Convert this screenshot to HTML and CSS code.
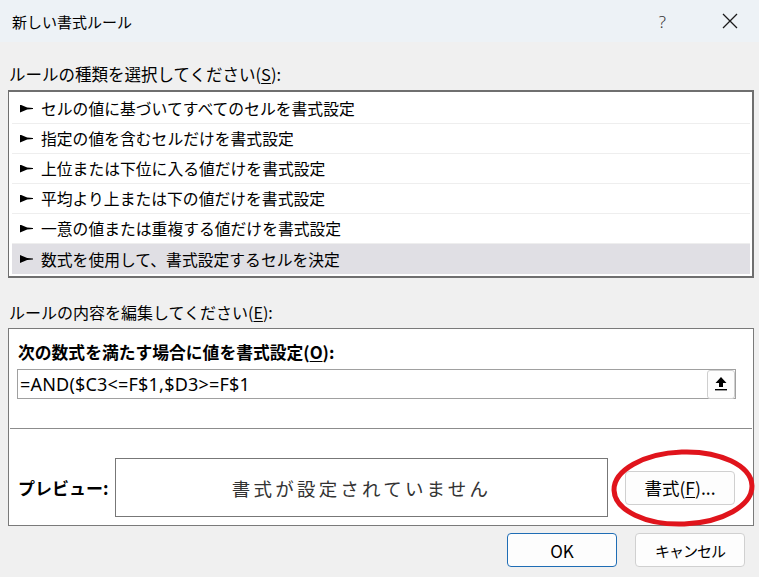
FILE: index.html
```html
<!DOCTYPE html>
<html lang="ja">
<head>
  <meta charset="UTF-8">
  <title>新しい書式ルール</title>
  <link rel="stylesheet" href="styles.css">
</head>
<body>
  <div class="dialog">
    <div class="titlebar">
      <span class="title">新しい書式ルール</span>
      <span class="help">?</span>
      <span class="close">
        <svg width="16" height="16" viewBox="0 0 16 16"><path d="M1 1L15 15M15 1L1 15" stroke="#1a1a1a" stroke-width="1.3" fill="none"/></svg>
      </span>
    </div>

    <div class="content">
      <div class="label">ルールの種類を選択してください(<u>S</u>):</div>
      <div class="listbox">
        <div class="item"><span class="arrow"></span>セルの値に基づいてすべてのセルを書式設定</div>
        <div class="item"><span class="arrow"></span>指定の値を含むセルだけを書式設定</div>
        <div class="item"><span class="arrow"></span>上位または下位に入る値だけを書式設定</div>
        <div class="item"><span class="arrow"></span>平均より上または下の値だけを書式設定</div>
        <div class="item"><span class="arrow"></span>一意の値または重複する値だけを書式設定</div>
        <div class="item selected"><span class="arrow"></span>数式を使用して、書式設定するセルを決定</div>
      </div>

      <div class="label label2">ルールの内容を編集してください(<u>E</u>):</div>
      <div class="panel">
        <div class="bold-label">次の数式を満たす場合に値を書式設定(<u>O</u>):</div>
        <div class="formula">
          <span class="formula-text">=AND($C3&lt;=F$1,$D3&gt;=F$1</span>
          <span class="pick">
            <svg width="14" height="16" viewBox="0 0 14 16"><path d="M7 1L12.5 7H9V11H5V7H1.5Z" fill="#000"/><rect x="1" y="13" width="12" height="1.4" fill="#000"/></svg>
          </span>
        </div>
        <div class="sep"></div>
        <div class="preview-row">
          <span class="bold-label">プレビュー:</span>
          <div class="preview">書式が設定されていません</div>
          <div class="format-wrap">
            <button class="btn format-btn">書式(<u>F</u>)...</button>
            <svg class="circle" width="150" height="84" viewBox="0 0 150 84"><ellipse cx="75" cy="42" rx="69" ry="36" fill="none" stroke="#e0141c" stroke-width="5" transform="rotate(-2 75 42)"/></svg>
          </div>
        </div>
      </div>

      <div class="buttons">
        <button class="btn ok">OK</button>
        <button class="btn cancel">キャンセル</button>
      </div>
    </div>
  </div>
</body>
</html>
```

FILE: styles.css
```css
body {
  margin: 0;
  background-color: #f0f0f0;
  font-family: "Noto Sans", "Noto Sans CJK JP", sans-serif;
  color: #000;
}
u {
  text-decoration-thickness: 1px;
  text-underline-offset: 2px;
}
.dialog {
  width: 759px;
  height: 577px;
  overflow: hidden;
}
.titlebar {
  height: 42px;
  background-color: #edf2f6;
  display: flex;
  align-items: center;
  padding-left: 12px;
}
.title {
  font-family: "Noto Sans CJK JP", sans-serif;
  font-size: 15px;
  flex: 1;
}
.help {
  font-size: 17px;
  color: #333;
  margin-right: 56px;
  font-weight: 300;
}
.close {
  display: flex;
  margin-right: 21px;
}
.content {
  padding: 0 5px 0 8px;
}
.label {
  font-family: "Noto Sans CJK JP", sans-serif;
  font-size: 16.5px;
  line-height: 22px;
  margin-top: 21px;
  margin-bottom: 5px;
  padding-left: 1px;
}
.label2 {
  margin-top: 23px;
  font-size: 16px;
}
.listbox {
  background: #fff;
  border: 2px solid #6f6f6f;
  border-left-width: 1px;
  padding: 2px 2px 2px 3px;
}
.item {
  height: 30px;
  box-sizing: border-box;
  border-bottom: 1px solid #eeeeee;
  display: flex;
  align-items: center;
  padding-left: 8px;
  font-family: "Noto Sans CJK JP", sans-serif;
  font-size: 15.8px;
}
.item:last-child {
  border-bottom: none;
}
.item.selected {
  background-color: #e0dfe4;
}
.arrow {
  width: 13px;
  height: 8px;
  margin-right: 8px;
  background: #000;
  clip-path: polygon(0 0, 55% 38%, 100% 44%, 100% 56%, 55% 62%, 0 100%);
}
.panel {
  background: #fff;
  border: 1px solid #7a7a7a;
  height: 196px;
  position: relative;
}
.bold-label {
  font-family: "Noto Sans CJK JP", sans-serif;
  font-weight: bold;
  font-size: 16.8px;
  line-height: 22px;
}
.panel > .bold-label {
  padding: 12px 0 0 9px;
}
.formula {
  margin: 6px 17px 0 8px;
  height: 30px;
  box-sizing: border-box;
  border: 1px solid #a0a0a0;
  display: flex;
  align-items: center;
  justify-content: space-between;
}
.formula-text {
  font-size: 18px;
  padding-left: 2px;
  letter-spacing: 0.2px;
}
.pick {
  width: 28px;
  height: 29px;
  box-sizing: border-box;
  border: 1px solid #cfcfcf;
  border-radius: 3px;
  background: #fdfdfd;
  display: flex;
  align-items: center;
  justify-content: center;
}
.sep {
  height: 1px;
  background: #8c8c8c;
  margin: 29px 1px 0 1px;
}
.preview-row {
  display: flex;
  align-items: center;
  padding-left: 9px;
  margin-top: 29px;
}
.preview-row .bold-label {
  width: 97px;
  font-size: 17px;
}
.preview {
  width: 493px;
  height: 59px;
  box-sizing: border-box;
  border: 1px solid #777;
  display: flex;
  align-items: center;
  justify-content: center;
  font-family: "Noto Sans CJK JP", sans-serif;
  font-size: 18.5px;
  letter-spacing: 3.2px;
  color: #333;
}
.format-wrap {
  position: relative;
  margin-left: 17px;
}
.btn {
  width: 110px;
  height: 34px;
  box-sizing: border-box;
  border: 1px solid #d0d0d0;
  border-radius: 4px;
  background: #fdfdfd;
  font-family: "Noto Sans CJK JP", sans-serif;
  font-size: 16px;
  color: #000;
  padding: 0;
}
.format-btn {
  font-size: 17.5px;
}
.cancel {
  font-size: 15px;
  letter-spacing: -1px;
}
.circle {
  position: absolute;
  left: -17px;
  top: -25px;
  pointer-events: none;
}
.buttons {
  display: flex;
  justify-content: flex-end;
  gap: 18px;
  margin-top: 7px;
  padding-right: 9px;
}
.btn.ok {
  border-color: #1f6db5;
  font-size: 17px;
}
```
